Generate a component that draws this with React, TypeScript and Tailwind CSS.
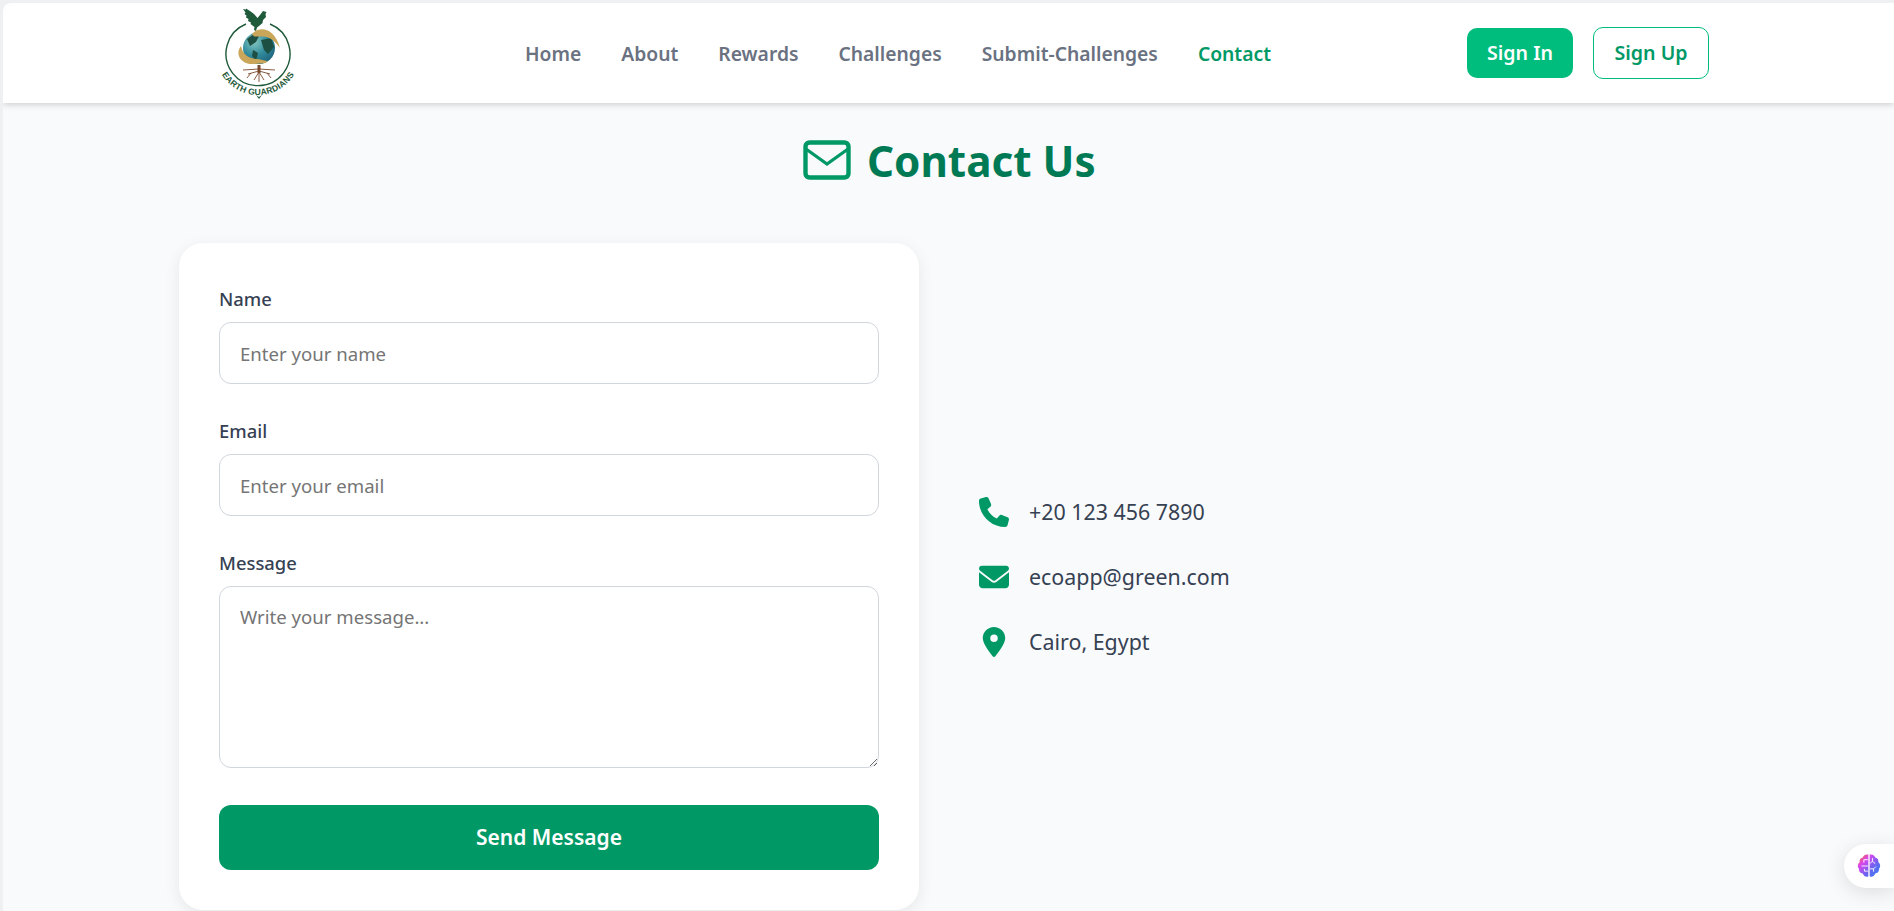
import React from "react";

const Logo = () => (
  <svg width="76" height="100" viewBox="0 0 76 100" className="shrink-0">
    <defs>
      <path id="arc" d="M-5 50 A 42 42 0 0 0 79 50" fill="none" />
      <radialGradient id="globe" cx="35%" cy="30%" r="80%">
        <stop offset="0" stopColor="#86c6bf" />
        <stop offset="0.55" stopColor="#2f8a9c" />
        <stop offset="1" stopColor="#1e5f78" />
      </radialGradient>
    </defs>
    <path d="M25 21 A 32 32 0 1 0 49 21" fill="none" stroke="#1f5a3a" strokeWidth="1.4" />
    <path d="M22 6 L25 6.5 L25 5.5 L29 8 L33 11 L36.5 15 L39 12 L42 8 L45.5 9 L44.5 11 L45 14 L42 17 L41.5 20 L38 23 L36 24.5 L35 28 L33 27 L33.5 24 L29.5 21 L30 19.5 L27 18 L27.5 16 L25 14.5 L25.5 12.5 L23.5 11 L24.5 9.5 Z" fill="#1f5a3a" />
    <circle cx="38" cy="45" r="16" fill="url(#globe)" />
    <path d="M26 36 L33 31 L38 33 L35 39 L29 43 Z M40 37 L50 35 L53 44 L47 51 L43 47 Z M32 47 L37 50 L35 58 L31 53 Z" fill="#1d4f43" />
    <path d="M31 31 C38 23 53 24 59 45 C54 38 49 34 42 33.5 L33 33.5 Z" fill="#c9a659" />
    <path d="M20 43 C13 52 21 62 33 61 L45 60 L46 58 L37 56 C28 56 22 52 20 43 Z" fill="#c9a659" />
    <path d="M36.5 62 L39.5 62 L39.5 70 L36.5 70 Z" fill="#7a4a2e" />
    <path d="M38 68 L27 71 M38 68 L49 71 M38 66 L22 67 M38 66 L54 67 M38 69 L33 77 M38 69 L43 77 M38 69 L38 79 M30 70 L26 75 M46 70 L50 75" stroke="#7a4a2e" strokeWidth="0.9" fill="none" />
    <text fontSize="8.6" fontWeight="700" fill="#1f5a3a" fontFamily="'Liberation Sans', sans-serif" textAnchor="middle" letterSpacing="0.2">
      <textPath href="#arc" startOffset="50%">EARTH GUARDIANS</textPath>
    </text>
    <path d="M35 92 L38 96 L41 92 L38 94 Z" fill="#1f5a3a" />
  </svg>
);

const BrainIcon = () => (
  <svg width="24" height="24" viewBox="1.5 1.5 21 21" fill="none">
    <defs>
      <linearGradient id="brain" x1="0" y1="0" x2="1" y2="1">
        <stop offset="0" stopColor="#f97316" />
        <stop offset="0.3" stopColor="#d946ef" />
        <stop offset="0.65" stopColor="#6366f1" />
        <stop offset="1" stopColor="#3b82f6" />
      </linearGradient>
    </defs>
    <path d="M11.4 2 C8.5 1.5 7 3 6.5 4.6 C4.2 5 3.4 7 3.9 8.6 C2 10.2 1.6 12.8 3.2 14.5 C3 17 4.8 18.6 6.5 18.6 C7.3 21 10 22.2 11.4 21 Z M12.6 2 C15.5 1.5 17 3 17.5 4.6 C19.8 5 20.6 7 20.1 8.6 C22 10.2 22.4 12.8 20.8 14.5 C21 17 19.2 18.6 17.5 18.6 C16.7 21 14 22.2 12.6 21 Z" fill="url(#brain)" />
    <path d="M11 6.5 H7.5 V9 M11 12 H5.5 M11 16.5 H8 V14.5 M15 5 V8 L13 9.5 M15 8 L17.5 10 M13 14.5 H16 L18 12.5 M16 14.5 V17" stroke="#fff" strokeWidth="0.8" />
  </svg>
);

const FieldLabel = ({ children }: { children: React.ReactNode }) => (
  <label className="block text-[18.4px] leading-[24px] font-medium text-gray-700 mb-[11px]">{children}</label>
);

const inputCls =
  "block w-full rounded-[12px] border border-gray-300 bg-white px-[20px] text-[18.6px] text-gray-700 placeholder:text-[#757575] outline-none";

export default function App() {
  const links = ["Home", "About", "Rewards", "Challenges", "Submit-Challenges", "Contact"];
  return (
    <div className="h-[911px] overflow-hidden bg-[#eff0f2] pl-[3px] pt-[3px] font-['Noto_Sans','Open_Sans',sans-serif]">
      <div className="relative h-[908px] rounded-tl-[8px] overflow-hidden bg-gray-50">
        <header className="flex h-[100px] items-center bg-white shadow-[0_2px_6px_rgba(0,0,0,0.16)] pl-[218px] pr-[185px]">
          <Logo />
          <nav className="ml-[228px] pt-[3px] flex items-center gap-[40px] text-[19.3px] font-semibold text-gray-500">
            {links.map((l) => (
              <a key={l} className={l === "Contact" ? "text-emerald-600" : ""}>{l}</a>
            ))}
          </nav>
          <div className="ml-auto flex items-center gap-[20px]">
            <button className="h-[50px] w-[106px] rounded-[10px] bg-emerald-500 text-[19.6px] font-semibold text-white">Sign In</button>
            <button className="h-[52px] w-[116px] rounded-[10px] border border-emerald-500 bg-white text-[19.6px] font-semibold text-emerald-600">Sign Up</button>
          </div>
        </header>

        <h1 className="mt-[28px] ml-[800px] flex items-center gap-[16px] text-[42.2px] leading-[60px] font-bold text-emerald-700">
          <svg width="48" height="40" viewBox="0 0 48 40" fill="none" stroke="#009966" className="shrink-0 -mt-[2px]">
            <rect x="2.5" y="2.5" width="43" height="35" rx="4" strokeWidth="4.4" />
            <path d="M3 9 L24 24 L45 9" strokeWidth="3.2" />
          </svg>
          Contact Us
        </h1>

        <main className="mt-[52px] flex pl-[176px]">
          <section className="w-[740px] h-[667px] shrink-0 rounded-[24px] bg-white p-[40px] shadow-[0_4px_16px_rgba(0,0,0,0.08)]">
            <div className="mt-[4px]">
              <FieldLabel>Name</FieldLabel>
              <input className={inputCls + " h-[62px] pt-[1px]"} placeholder="Enter your name" />
            </div>
            <div className="mt-[35px]">
              <FieldLabel>Email</FieldLabel>
              <input className={inputCls + " h-[62px] pt-[1px]"} placeholder="Enter your email" />
            </div>
            <div className="mt-[35px]">
              <FieldLabel>Message</FieldLabel>
              <textarea className={inputCls + " h-[182px] py-[16px]"} placeholder="Write your message..." />
            </div>
            <button className="mt-[37px] h-[65px] w-full rounded-[12px] bg-emerald-600 pt-[1px] text-[21px] font-semibold text-white">Send Message</button>
          </section>

          <aside className="ml-[60px] flex h-[667px] flex-col justify-center gap-[29px] text-[21.4px] leading-[36px] text-gray-700">
            <div className="flex items-center gap-[20px]">
              <svg width="30" height="30" viewBox="0 0 512 512" fill="#009966" className="shrink-0"><path d="M164.9 24.6c-7.7-18.6-28-28.5-47.4-23.2l-88 24C12.1 30.2 0 46 0 64C0 311.4 200.6 512 448 512c18 0 33.8-12.1 38.6-29.5l24-88c5.3-19.4-4.6-39.7-23.2-47.4l-96-40c-16.3-6.8-35.2-2.1-46.3 11.6L304.7 368C234.3 334.7 177.3 277.7 144 207.3L193.3 167c13.7-11.2 18.4-30 11.6-46.3l-40-96z" /></svg>
              <span>+20 123 456 7890</span>
            </div>
            <div className="flex items-center gap-[20px]">
              <svg width="30" height="30" viewBox="0 0 512 512" fill="#009966" className="shrink-0"><path d="M48 64C21.5 64 0 85.5 0 112c0 15.1 7.1 29.3 19.2 38.4L236.8 313.6c11.4 8.5 27 8.5 38.4 0L492.8 150.4c12.1-9.1 19.2-23.3 19.2-38.4c0-26.5-21.5-48-48-48H48zM0 176V384c0 35.3 28.7 64 64 64H448c35.3 0 64-28.7 64-64V176L294.4 339.2c-22.8 17.1-54 17.1-76.8 0L0 176z" /></svg>
              <span>ecoapp@green.com</span>
            </div>
            <div className="flex items-center gap-[20px]">
              <svg width="30" height="30" viewBox="0 0 384 512" fill="#009966" className="shrink-0"><path d="M215.7 499.2C267 435 384 279.4 384 192C384 86 298 0 192 0S0 86 0 192c0 87.4 117 243 168.3 307.2c12.3 15.3 35.1 15.3 47.4 0zM192 128a64 64 0 1 1 0 128 64 64 0 1 1 0-128z" /></svg>
              <span>Cairo, Egypt</span>
            </div>
          </aside>
        </main>

        <div className="absolute right-0 top-[841px] flex h-[44px] w-[50px] items-center rounded-l-[22px] bg-white pl-[13px] shadow-[0_4px_20px_rgba(0,0,0,0.12)]">
          <BrainIcon />
        </div>
      </div>
    </div>
  );
}
